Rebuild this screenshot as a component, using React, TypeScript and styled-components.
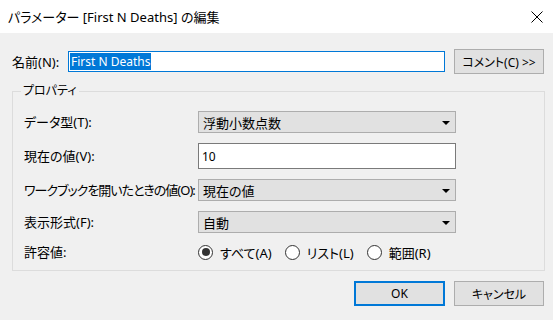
import React from "react";
import styled, { createGlobalStyle } from "styled-components";

const GlobalStyle = createGlobalStyle`
  html, body {
    margin: 0;
    padding: 0;
    background: #f0f0f0;
  }
  body {
    font-family: "Noto Sans", "Noto Sans CJK JP", sans-serif;
    font-feature-settings: "palt";
    color: #000;
  }
`;

const Window = styled.div`
  width: 553px;
  height: 320px;
  background: #f0f0f0;
  display: flex;
  flex-direction: column;
  overflow: hidden;
`;

const TitleBar = styled.div`
  height: 33px;
  background: #fff;
  display: flex;
  align-items: center;
  justify-content: space-between;
  padding: 0 10px 0 8px;
  flex-shrink: 0;
`;

const Title = styled.div`
  font-size: 13px;
  line-height: 20px;
`;

const Close = styled.svg`
  width: 12px;
  height: 12px;
`;

const Body = styled.div`
  padding: 16px 8px 0 12px;
  display: flex;
  flex-direction: column;
  font-size: 13px;
`;

const NameRow = styled.div`
  display: flex;
  align-items: center;
  height: 25px;
`;

const Label = styled.div<{ width?: number; tight?: boolean }>`
  width: ${(p) => (p.width ? `${p.width}px` : "auto")};
  white-space: nowrap;
  font-size: 13px;
  line-height: 16px;
  letter-spacing: ${(p) => (p.tight ? "-1px" : "0")};
`;

const NameBox = styled.div`
  width: 377px;
  height: 21px;
  box-sizing: border-box;
  border: 1px solid #0078d7;
  background: #fff;
  display: flex;
  align-items: center;
  padding-left: 1px;
  margin-right: 9px;
`;

const Selected = styled.span`
  background: #0078d7;
  color: #fff;
  font-size: 12px;
  line-height: 17px;
  padding: 0 1px;
`;

const Button = styled.div<{ primary?: boolean; width: number }>`
  width: ${(p) => p.width}px;
  height: 25px;
  box-sizing: border-box;
  border: ${(p) => (p.primary ? "2px solid #0078d7" : "1px solid #adadad")};
  background: #e1e1e1;
  display: flex;
  align-items: center;
  justify-content: center;
  font-size: 12px;
  white-space: nowrap;
`;

const Group = styled.fieldset`
  margin: 9px 0 0 0;
  padding: 12px 0 10px 11px;
  border: 1px solid #dcdcdc;
  min-width: 0;
`;

const Legend = styled.legend`
  font-size: 12px;
  line-height: 16px;
  padding: 0 2px;
  margin-left: -3px;
`;

const Grid = styled.div`
  display: grid;
  grid-template-columns: 174px 258px;
  row-gap: 10px;
  align-items: center;
`;

const Select = styled.div`
  height: 22px;
  box-sizing: border-box;
  border: 1px solid #adadad;
  background: #e1e1e1;
  display: flex;
  align-items: center;
  justify-content: space-between;
  padding: 0 5px 0 4px;
  font-size: 13px;
`;

const Arrow = styled.span`
  width: 0;
  height: 0;
  border-left: 4px solid transparent;
  border-right: 4px solid transparent;
  border-top: 4px solid #000;
  margin-top: 1px;
`;

const TextBox = styled.div`
  height: 26px;
  box-sizing: border-box;
  border: 1px solid #7a7a7a;
  background: #fff;
  display: flex;
  align-items: center;
  padding-left: 3px;
  font-size: 12px;
`;

const RadioRow = styled.div`
  display: flex;
  align-items: center;
  gap: 13px;
  height: 16px;
  margin-top: 1px;
`;

const RadioItem = styled.div`
  display: flex;
  align-items: center;
  gap: 7px;
  white-space: nowrap;
  font-size: 13px;
`;

const RadioCircle = styled.span<{ checked?: boolean }>`
  width: 15px;
  height: 15px;
  box-sizing: border-box;
  border-radius: 50%;
  border: 1px solid #333;
  background: #fff;
  display: flex;
  align-items: center;
  justify-content: center;
  &::after {
    content: "";
    width: 8px;
    height: 8px;
    border-radius: 50%;
    background: ${(p) => (p.checked ? "#333" : "transparent")};
  }
`;

const Footer = styled.div`
  display: flex;
  justify-content: flex-end;
  gap: 9px;
  margin-top: 10px;
  padding-right: 1px;
`;

const DropDown = ({ value }: { value: string }) => (
  <Select>
    <span>{value}</span>
    <Arrow />
  </Select>
);

const Radio = ({ label, checked }: { label: string; checked?: boolean }) => (
  <RadioItem>
    <RadioCircle checked={checked} />
    <span>{label}</span>
  </RadioItem>
);

const App = () => {
  return (
    <Window>
      <GlobalStyle />
      <TitleBar>
        <Title>パラメーター [First N Deaths] の編集</Title>
        <Close viewBox="0 0 12 12">
          <path d="M0.5 0.5 L11.5 11.5 M11.5 0.5 L0.5 11.5" stroke="#000" strokeWidth="1" fill="none" />
        </Close>
      </TitleBar>
      <Body>
        <NameRow>
          <Label width={56}>名前(N):</Label>
          <NameBox>
            <Selected>First N Deaths</Selected>
          </NameBox>
          <Button width={90}>コメント(C) &gt;&gt;</Button>
        </NameRow>
        <Group>
          <Legend>プロパティ</Legend>
          <Grid>
            <Label>データ型(T):</Label>
            <DropDown value="浮動小数点数" />
            <Label>現在の値(V):</Label>
            <TextBox>10</TextBox>
            <Label tight>ワークブックを開いたときの値(O):</Label>
            <DropDown value="現在の値" />
            <Label>表示形式(F):</Label>
            <DropDown value="自動" />
            <Label>許容値:</Label>
            <RadioRow>
              <Radio label="すべて(A)" checked />
              <Radio label="リスト(L)" />
              <Radio label="範囲(R)" />
            </RadioRow>
          </Grid>
        </Group>
        <Footer>
          <Button primary width={91}>OK</Button>
          <Button width={90}>キャンセル</Button>
        </Footer>
      </Body>
    </Window>
  );
};

export default App;
